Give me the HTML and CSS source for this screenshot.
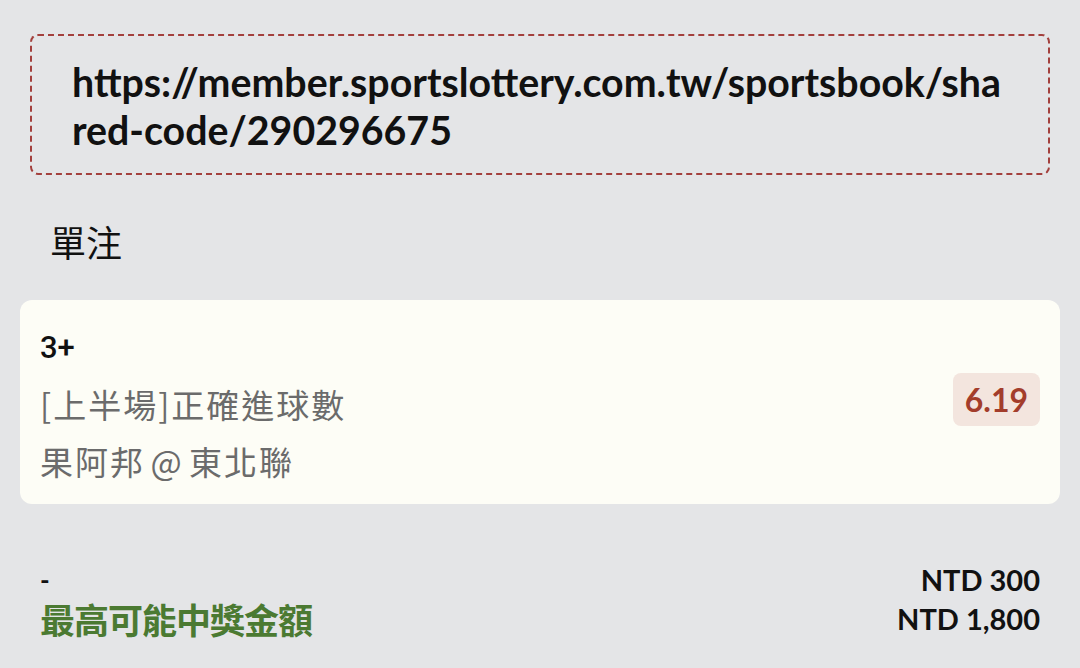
FILE: index.html
```html
<!DOCTYPE html>
<html lang="zh-Hant">
<head>
    <meta charset="UTF-8">
    <meta name="viewport" content="width=device-width, initial-scale=1.0">
    <title>單注</title>
    <link rel="stylesheet" href="styles.css">
</head>
<body>
    <div class="share-link">https://member.sportslottery.com.tw/sportsbook/shared-code/290296675</div>

    <div class="bet-type">單注</div>

    <div class="bet-card">
        <div class="bet-info">
            <div class="bet-pick">3+</div>
            <div class="bet-market">[上半場]正確進球數</div>
            <div class="bet-match">果阿邦 @ 東北聯</div>
        </div>
        <div class="odds">6.19</div>
    </div>

    <div class="summary">
        <div class="summary-row">
            <span class="stake-label">-</span>
            <span class="amount">NTD 300</span>
        </div>
        <div class="summary-row">
            <span class="win-label">最高可能中獎金額</span>
            <span class="amount">NTD 1,800</span>
        </div>
    </div>
</body>
</html>
```

FILE: styles.css
```css
body {
    margin: 0;
    background-color: #e4e5e7;
    font-family: Lato, "Noto Sans CJK TC", sans-serif;
    color: #111;
}
.share-link {
    margin: 34px 30px 0 30px;
    padding: 22px 40px 19px 40px;
    border: 2px dashed #a3403d;
    border-radius: 8px;
    font-size: 39.3px;
    font-weight: bold;
    line-height: 48px;
    word-break: break-all;
}
.bet-type {
    padding: 44px 0 0 50px;
    font-family: "Noto Sans CJK TC", sans-serif;
    font-size: 36px;
    line-height: 44px;
}
.bet-card {
    display: flex;
    align-items: center;
    justify-content: space-between;
    margin: 37px 20px 0 20px;
    padding: 19px 20px 14px 20px;
    background-color: #fdfdf6;
    border-radius: 12px;
}
.bet-info {
    display: flex;
    flex-direction: column;
}
.bet-pick {
    font-family: Roboto, sans-serif;
    font-weight: 500;
    font-size: 31px;
    line-height: 57px;
}
.bet-market,
.bet-match {
    font-family: "Noto Sans CJK TC", sans-serif;
    font-size: 33px;
    line-height: 57px;
    color: #6b6b6b;
    letter-spacing: 2px;
}
.bet-match {
    word-spacing: -4px;
}
.odds {
    margin-top: -10px;
    padding: 0 12px;
    background-color: #f3e5de;
    border-radius: 8px;
    color: #a33d2b;
    font-size: 32px;
    font-weight: bold;
    line-height: 53px;
}
.summary {
    padding: 56px 40px 0 40px;
}
.summary-row {
    display: flex;
    justify-content: space-between;
    align-items: center;
    height: 39px;
}
.stake-label {
    font-size: 26px;
    font-weight: bold;
}
.win-label {
    font-family: "Noto Sans CJK TC", sans-serif;
    font-size: 35px;
    font-weight: bold;
    letter-spacing: -1px;
    color: #4b7a32;
}
.amount {
    font-size: 29px;
    font-weight: bold;
}
```
